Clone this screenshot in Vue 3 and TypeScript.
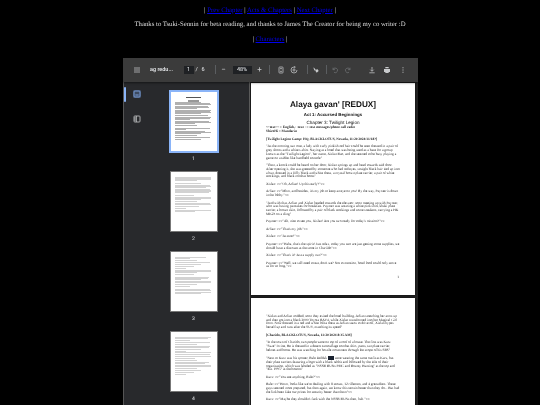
<script setup lang="ts">
const seeds = [
  [70, 95, 98, 90, 92, 60, 0, 96, 94, 98, 70, 0, 90, 98, 95, 40, 0, 92, 96, 55, 0, 60, 0, 95, 30, 0, 80, 98, 70, 0, 60, 0, 94, 70],
  [97, 96, 98, 60, 0, 70, 0, 95, 97, 85, 0, 94, 98, 96, 92, 0, 50, 0, 96, 98, 70, 0, 60, 0, 94, 96, 65, 0, 30, 0, 98, 55],
  [85, 40, 0, 60, 0, 94, 70, 0, 50, 0, 30, 0, 96, 98, 60, 0, 50, 0, 92, 90, 70, 0, 98, 96, 0, 60, 0, 40, 0, 94, 96, 0, 98, 70],
  [96, 88, 0, 40, 0, 94, 60, 0, 95, 92, 0, 70, 0, 30, 96, 0, 94, 98, 0, 55, 0, 60, 0, 92, 80, 0, 98, 96, 60, 0, 70, 0, 50, 0, 30],
]
const thumbs = seeds.map((lines, i) => ({ n: i + 1, lines }))
</script>

<template>
  <div class="page">
    <p class="line first">| <a href="#">Prev Chapter</a> | <a href="#">Acts &amp; Chapters</a> | <a href="#">Next Chapter</a> |</p>
    <p class="line">Thanks to Tsuki-Sennin for beta reading, and thanks to James The Creator for being my co writer :D</p>
    <p class="line">| <a href="#">Characters</a> |</p>

    <section class="viewer">
      <header class="toolbar">
        <svg class="ic menu" viewBox="0 0 12 12"><path d="M1.5 3h9M1.5 6h9M1.5 9h9" /></svg>
        <span class="title">ag redu...</span>
        <span class="pageno">1</span>
        <span class="of">/</span>
        <span class="total">6</span>
        <i class="sep sep-a"></i>
        <span class="zbtn">−</span>
        <span class="zoomval">48%</span>
        <span class="zbtn plus">+</span>
        <i class="sep sep-b"></i>
        <svg class="ic fit" viewBox="0 0 12 12"><rect x="3" y="1.5" width="6" height="9" rx="1" /><path d="M4.5 4h3M4.5 8h3" /></svg>
        <svg class="ic rotate" viewBox="0 0 12 12"><path d="M6 1.5A4.5 4.5 0 1 0 10.5 6" /><circle cx="6" cy="6" r="1.6" /><path d="M6 .5l2 1.2L6 3" /></svg>
        <i class="sep sep-c"></i>
        <svg class="ic pen" viewBox="0 0 12 12"><path d="M2.5 2l3 3.5L4 7l-1.5-3zM5.5 5.5l3-.5 1.5 2.5-3 2.5-2-3z" class="solid" /></svg>
        <i class="sep sep-d"></i>
        <svg class="ic dim undo" viewBox="0 0 12 12"><path d="M3 2.5v3h3M3 5.5A3.5 3.5 0 1 1 4.5 9.5" /></svg>
        <svg class="ic dim redo" viewBox="0 0 12 12"><path d="M9 2.5v3H6M9 5.5A3.5 3.5 0 1 0 7.5 9.5" /></svg>
        <span class="grow"></span>
        <svg class="ic" viewBox="0 0 12 12"><path d="M6 1.5v6M3.5 5.5L6 8l2.5-2.5M2 10.2h8" /></svg>
        <svg class="ic print" viewBox="0 0 12 12"><path class="solid" d="M3.5 1.5h5v2h-5zM1.5 4.5h9v4.5h-2v1.5h-5V9h-2z" /></svg>
        <svg class="ic more" viewBox="0 0 12 12"><path class="solid" d="M5.3 2h1.4v1.4H5.3zM5.3 5.3h1.4v1.4H5.3zM5.3 8.6h1.4V10H5.3z" /></svg>
      </header>

      <div class="body">
        <aside class="rail">
          <span class="rail-mark"></span>
          <svg class="rail-ic active" viewBox="0 0 12 12"><rect x="1.5" y="1.5" width="9" height="9" rx="1.2" /><path d="M3.5 7.5h5" /></svg>
          <svg class="rail-ic" viewBox="0 0 12 12"><rect x="1.5" y="1.5" width="9" height="9" rx="1.2" /><path d="M5 1.5v9M1.5 4.5H5M1.5 7.5H5" /></svg>
        </aside>
        <div class="thumbs">
          <div v-for="t in thumbs" :key="t.n" class="thumb">
            <div class="sheet" :class="{ selected: t.n === 1 }">
              <template v-if="t.n === 1">
                <div class="tline head"></div>
                <div class="tline sub"></div>
                <div class="tline sub"></div>
              </template>
              <div
                v-for="(w, i) in t.lines"
                :key="i"
                class="tline"
                :class="{ gap: w === 0 }"
                :style="{ width: w + '%' }"
              ></div>
            </div>
            <span class="tnum">{{ t.n }}</span>
          </div>
        </div>
        <main class="doc">
          <article class="pdf one">
            <h1>Alaya gavan' [REDUX]</h1>
            <h2>Act 1: Accursed Beginnings</h2>
            <h3>Chapter 3: Twilight Legion</h3>
            <p class="key">~~text~~ = English, □text□ = text messages/phone call radio<br />ShiroHi = Mandarin</p>
            <p class="b">[Twilight Legion Camp: HQ, BLACKLOTUS, Nevada, 11:20 2024/11/18?]</p>
            <p>"As the morning sun rose, a lady with curly pinkish red hair could be seen dressed in a pair of grey shorts and a white t-shirt. Staying at a hotel that was being used as a base for a group known as the "Twilight Legion", her name, Xislan Bao, and she seemed to be busy playing a game on a tablet like handheld console"</p>
            <p>"Then, a knock could be heard on her door, Xislan springs up and head towards said door. After opening it, she was greeted by someone who had red eyes, straight black hair tied up into a bun, dressed in a frilly black and white dress, a crystal brown plate carrier, a pair of white stockings, and black combat boots"</p>
            <p>Xislan: &gt;&gt;"Oh, Arlian! Up this early?"&lt;&lt;</p>
            <p>Arlian: &gt;&gt;"Mhm, and besides, it's my job to keep an eye on you! By the way, Paynter is down in the lobby."&lt;&lt;</p>
            <p>"And with that, Arlian and Xislan headed towards the elevator, soon meeting up with Paynter, who was having pancakes for breakfast. Paynter was wearing a white pink shirt, khaki plate carrier, a brown skirt, followed by a pair of black stockings and some sneakers, carrying a HK MK23 on a sling"</p>
            <p>Paynter: &gt;&gt;"Ah, nice to see you, Xislan! Are you two ready for today's mission?"&lt;&lt;</p>
            <p>Arlian: &gt;&gt;"That's my job."&lt;&lt;</p>
            <p>Xislan: &gt;&gt;"As ever!"&lt;&lt;</p>
            <p>Paynter: &gt;&gt;"Haha, that's the spirit! Just relax, today you two are just getting some supplies, we should have a discount at the store in Chariido"&lt;&lt;</p>
            <p>Xislan: &gt;&gt;"That's it? Just a supply run?"&lt;&lt;</p>
            <p>Paynter: &gt;&gt;"Well, we still need to eat, don't we? Not to mention, hotel food could only serve us for so long."&lt;&lt;</p>
            <span class="folio">1</span>
          </article>
          <article class="pdf two">
            <p>"Xislan and Arlian nodded, soon they exited the hotel building, Arlian stretching her arms up and then got into a black 2000 Toyota RAV4, while Xislan transformed into her Magical Girl form. Now dressed in a red and white lolita dress as Arlian starts to drive off, Xislan hypes herself up and runs after the SUV, matching its speed"</p>
            <p class="b">[Charido, BLACKLOTUS, Nevada, 11:20 2024 8:35 AM]</p>
            <p>"In the town of Charido, two people were on top of a roof of a house. The first was Kurz "Suze" Irvine, He is dressed in a desert camouflage combat shirt, pants, tan plate carrier, helmet and boots. He was watching for hostile movement through the scope of his SRS"</p>
            <p>"Next to Kurz was his spotter, Rule Delduk <span class="redact"></span> were wearing the same outfit as Kurz, but their plate carriers featuring a logo with a black rabbit and followed by the title of their organisation, which was labeled as "NSSB BUNs PMC and Bounty Hunting" at the top and "Est. 1995" at the bottom"</p>
            <p>Kurz: &gt;&gt;"You see anything, Rule?"&lt;&lt;</p>
            <p>Rule: &gt;&gt;"Hmm, looks like we're dealing with 8 scouts, 12 riflemen, and 4 grenadiers. These guys seemed more prepared, but then again, we know this terrain better than they do... But had the link been fake our prices for security better than them"&lt;&lt;</p>
            <p>Kurz: &gt;&gt;"Maybe they shouldn't fuck with the NSSB BUNs then, huh."&lt;&lt;</p>
            <p class="persp">[Perspective: RED-XIXIZIN]</p>
          </article>
        </main>
      </div>
    </section>
  </div>
</template>

<style>
html, body { margin: 0; background: #000; overflow: hidden; }
</style>

<style scoped>
.page {
  width: 540px;
  height: 405px;
  overflow: hidden;
  background: #000;
  color: #ddd;
  font-family: "Liberation Serif", serif;
  font-size: 6.75px;
  text-align: center;
  display: flex;
  flex-direction: column;
  align-items: center;
  filter: blur(0.25px);
  text-rendering: geometricPrecision;
}
.line { margin: 0 0 5.4px; line-height: 9px; height: 9px; }
.first { margin-top: 5.8px; }
a { color: #0000ee; text-decoration: underline; }
.viewer {
  margin-top: 9px;
  width: 295px;
  flex: 1;
  min-height: 0;
  display: flex;
  flex-direction: column;
  background: #282828;
  font-family: Roboto, sans-serif;
  color: #e8eaed;
}
.toolbar {
  height: 24px;
  flex: none;
  background: #3b3b3b;
  display: flex;
  align-items: center;
  padding: 0 11px 0 10px;
  box-shadow: 0 1px 2px rgba(0, 0, 0, .5);
  position: relative;
  z-index: 1;
  font-size: 5.5px;
}
.ic { width: 8px; height: 8px; fill: none; stroke: #c8cacc; stroke-width: 1.1; flex: none; }
.ic .solid { fill: #c8cacc; stroke: none; }
.ic.dim { stroke: #6f7275; }
.title { margin-left: 9px; width: 24px; white-space: nowrap; font-weight: 500; }
.pageno { margin-left: 10px; width: 10px; height: 8px; line-height: 8px; background: #1f2124; text-align: center; }
.of { margin-left: 2px; width: 2px; }
.total { margin-left: 3px; width: 5px; }
.sep { width: 1px; height: 9px; background: #5b5e61; flex: none; }
.sep-a { margin-left: 9px; }
.sep-b { margin-left: 5px; }
.sep-c { margin-left: 9px; }
.sep-d { margin-left: 6px; }
.zbtn { width: 8px; margin-left: 4px; font-size: 8px; text-align: center; color: #c8cacc; }
.zoomval { margin-left: 5px; width: 19px; height: 8px; line-height: 8px; background: #1f2124; text-align: center; }
.fit { margin-left: 7px; }
.rotate { margin-left: 5px; }
.pen { margin-left: 4px; }
.undo { margin-left: 4px; }
.redo { margin-left: 5px; }
.print { margin-left: 7px; }
.more { margin-left: 8px; }
.grow { flex: 1; }
.body { flex: 1; min-height: 0; display: flex; }
.rail {
  width: 26px;
  flex: none;
  background: #28292c;
  position: relative;
  display: flex;
  flex-direction: column;
  align-items: center;
  gap: 17px;
  padding-top: 8px;
  padding-left: 1px;
  box-sizing: border-box;
  border-left: 1px solid #555;
}
.rail-mark { position: absolute; left: 0; top: 5px; width: 2px; height: 15px; background: #8ab4f8; border-radius: 1px; }
.rail-ic { width: 8px; height: 8px; fill: none; stroke: #c8cacc; stroke-width: 1.2; }
.rail-ic.active { stroke: #8ab4f8; background: #3c4a60; border-radius: 1px; }
.thumbs {
  width: 100px;
  flex: none;
  background: #28292c;
  display: flex;
  flex-direction: column;
  align-items: center;
  padding-top: 10px;
  padding-right: 10px;
  box-sizing: border-box;
  gap: 10px;
  overflow: hidden;
}
.thumb { display: flex; flex-direction: column; align-items: center; gap: 5px; flex: none; }
.sheet {
  width: 46px;
  height: 59px;
  box-sizing: border-box;
  background: #fff;
  padding: 5px 4.5px;
  display: flex;
  flex-direction: column;
  gap: .45px;
  align-items: flex-start;
  overflow: hidden;
  outline: 1px solid #777;
}
.sheet.selected { outline: 2px solid #8ab4f8; }
.tline { height: .7px; background: #d2d2d2; flex: none; }
.selected .tline { background: #b0b0b0; }
.tline.gap { background: transparent; height: .6px; }
.selected .tline.gap { background: transparent; }
.selected .tline.head { width: 40%; height: 1.5px; background: #555; margin: 0 auto 1px; }
.selected .tline.sub { width: 30%; background: #999; margin: 0 auto; }
.tnum { font-size: 5px; line-height: 6px; color: #e8eaed; }
.doc {
  flex: 1;
  min-width: 0;
  display: flex;
  flex-direction: column;
  align-items: center;
  gap: 3px;
  overflow: hidden;
  background: #222;
  border-left: 1px solid #5a5a5a;
  padding-right: 1px;
  padding-top: 1px;
}
.pdf {
  width: 164px;
  height: 212px;
  flex: none;
  box-sizing: border-box;
  background: #fff;
  color: #1c1c1c;
  font-family: "Liberation Serif", serif;
  font-size: 3.52px;
  line-height: 3.75px;
  text-align: left;
  position: relative;
  box-shadow: 0 0 2px rgba(0, 0, 0, .7);
}
.pdf.one { padding: 17px 15px 0 15px; }
.pdf.two { padding: 17px 15px 0 15px; }
.pdf p { margin: 0 0 3.75px; }
.pdf .b { font-weight: 700; }
.pdf .key { font-weight: 700; margin-bottom: 4.5px; }
.pdf .persp { margin-bottom: 0; }
h1, h2, h3 { font-family: "Liberation Sans", sans-serif; text-align: center; margin: 0; color: #111; }
h1 { font-size: 8.2px; line-height: 9px; font-weight: 700; margin-bottom: 3.5px; }
h2 { font-size: 4.4px; line-height: 5px; font-weight: 700; margin-bottom: 3px; }
h3 { font-size: 4.6px; line-height: 5px; font-weight: 400; margin-bottom: .5px; }
.redact { display: inline-block; width: 6px; height: 3.5px; background: #1a2230; vertical-align: -0.5px; }
.folio { position: absolute; right: 16px; top: 193px; }
</style>
